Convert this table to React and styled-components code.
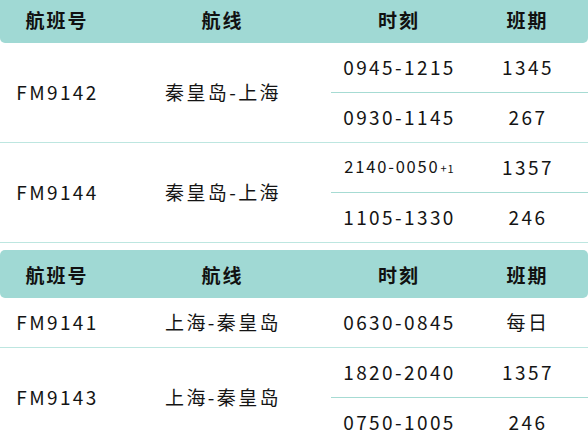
import React from 'react'
import styled, { createGlobalStyle } from 'styled-components'

const GlobalStyle = createGlobalStyle`
  html, body {
    margin: 0;
    padding: 0;
    background: #ffffff;
    overflow: hidden;
  }
  body {
    font-family: 'Noto Sans CJK SC', 'Noto Sans', sans-serif;
    color: #141414;
  }
`

const Page = styled.div`
  margin-top: -5px;
  display: flex;
  flex-direction: column;
  gap: 7px;
`

const Table = styled.section`
  display: flex;
  flex-direction: column;
`

const Header = styled.div`
  display: grid;
  grid-template-columns: 112px 219px 134px 1fr;
  height: 48px;
  background-color: #a0d9d4;
  border-radius: 5px;
`

const HeadCell = styled.div`
  display: flex;
  align-items: center;
  justify-content: center;
  padding-left: 2px;
  font-size: 19px;
  font-weight: 700;
  letter-spacing: 2px;
  color: #111;
`

const FlightRow = styled.div`
  display: grid;
  grid-template-columns: 112px 219px 1fr;
  border-bottom: 1px solid #bde6e0;
`

const Cell = styled.div`
  display: flex;
  align-items: center;
  justify-content: center;
  padding: 0 0 3px 3px;
  font-size: 19px;
  letter-spacing: 2.4px;
  color: #141414;
`

const Slots = styled.div`
  display: flex;
  flex-direction: column;
`

const Slot = styled.div`
  display: grid;
  grid-template-columns: 134px 1fr;
  height: 49px;

  & + & {
    border-top: 1px solid #a6dbd3;
  }
`

const Small = styled.span`
  font-size: 16.5px;
  letter-spacing: 1.8px;
`

const NextDay = styled.span`
  font-size: 11px;
  letter-spacing: 1px;
  margin-left: 1px;
  padding-top: 3px;
`

const tables = [
  {
    flights: [
      {
        no: 'FM9142',
        route: '秦皇岛-上海',
        slots: [
          { time: '0945-1215', days: '1345' },
          { time: '0930-1145', days: '267' },
        ],
      },
      {
        no: 'FM9144',
        route: '秦皇岛-上海',
        slots: [
          { time: '2140-0050', next: true, days: '1357' },
          { time: '1105-1330', days: '246' },
        ],
      },
    ],
  },
  {
    flights: [
      {
        no: 'FM9141',
        route: '上海-秦皇岛',
        slots: [{ time: '0630-0845', days: '每日' }],
      },
      {
        no: 'FM9143',
        route: '上海-秦皇岛',
        slots: [
          { time: '1820-2040', days: '1357' },
          { time: '0750-1005', days: '246' },
        ],
      },
    ],
  },
]

function TimeCell({ slot }) {
  if (slot.next) {
    return (
      <Cell>
        <Small>{slot.time}</Small>
        <NextDay>+1</NextDay>
      </Cell>
    )
  }
  return <Cell>{slot.time}</Cell>
}

export default function App() {
  return (
    <>
      <GlobalStyle />
      <Page>
        {tables.map((table, i) => (
          <Table key={i}>
            <Header>
              <HeadCell>航班号</HeadCell>
              <HeadCell>航线</HeadCell>
              <HeadCell>时刻</HeadCell>
              <HeadCell>班期</HeadCell>
            </Header>
            {table.flights.map((f) => (
              <FlightRow key={f.no}>
                <Cell>{f.no}</Cell>
                <Cell>{f.route}</Cell>
                <Slots>
                  {f.slots.map((s) => (
                    <Slot key={s.time}>
                      <TimeCell slot={s} />
                      <Cell>{s.days}</Cell>
                    </Slot>
                  ))}
                </Slots>
              </FlightRow>
            ))}
          </Table>
        ))}
      </Page>
    </>
  )
}
